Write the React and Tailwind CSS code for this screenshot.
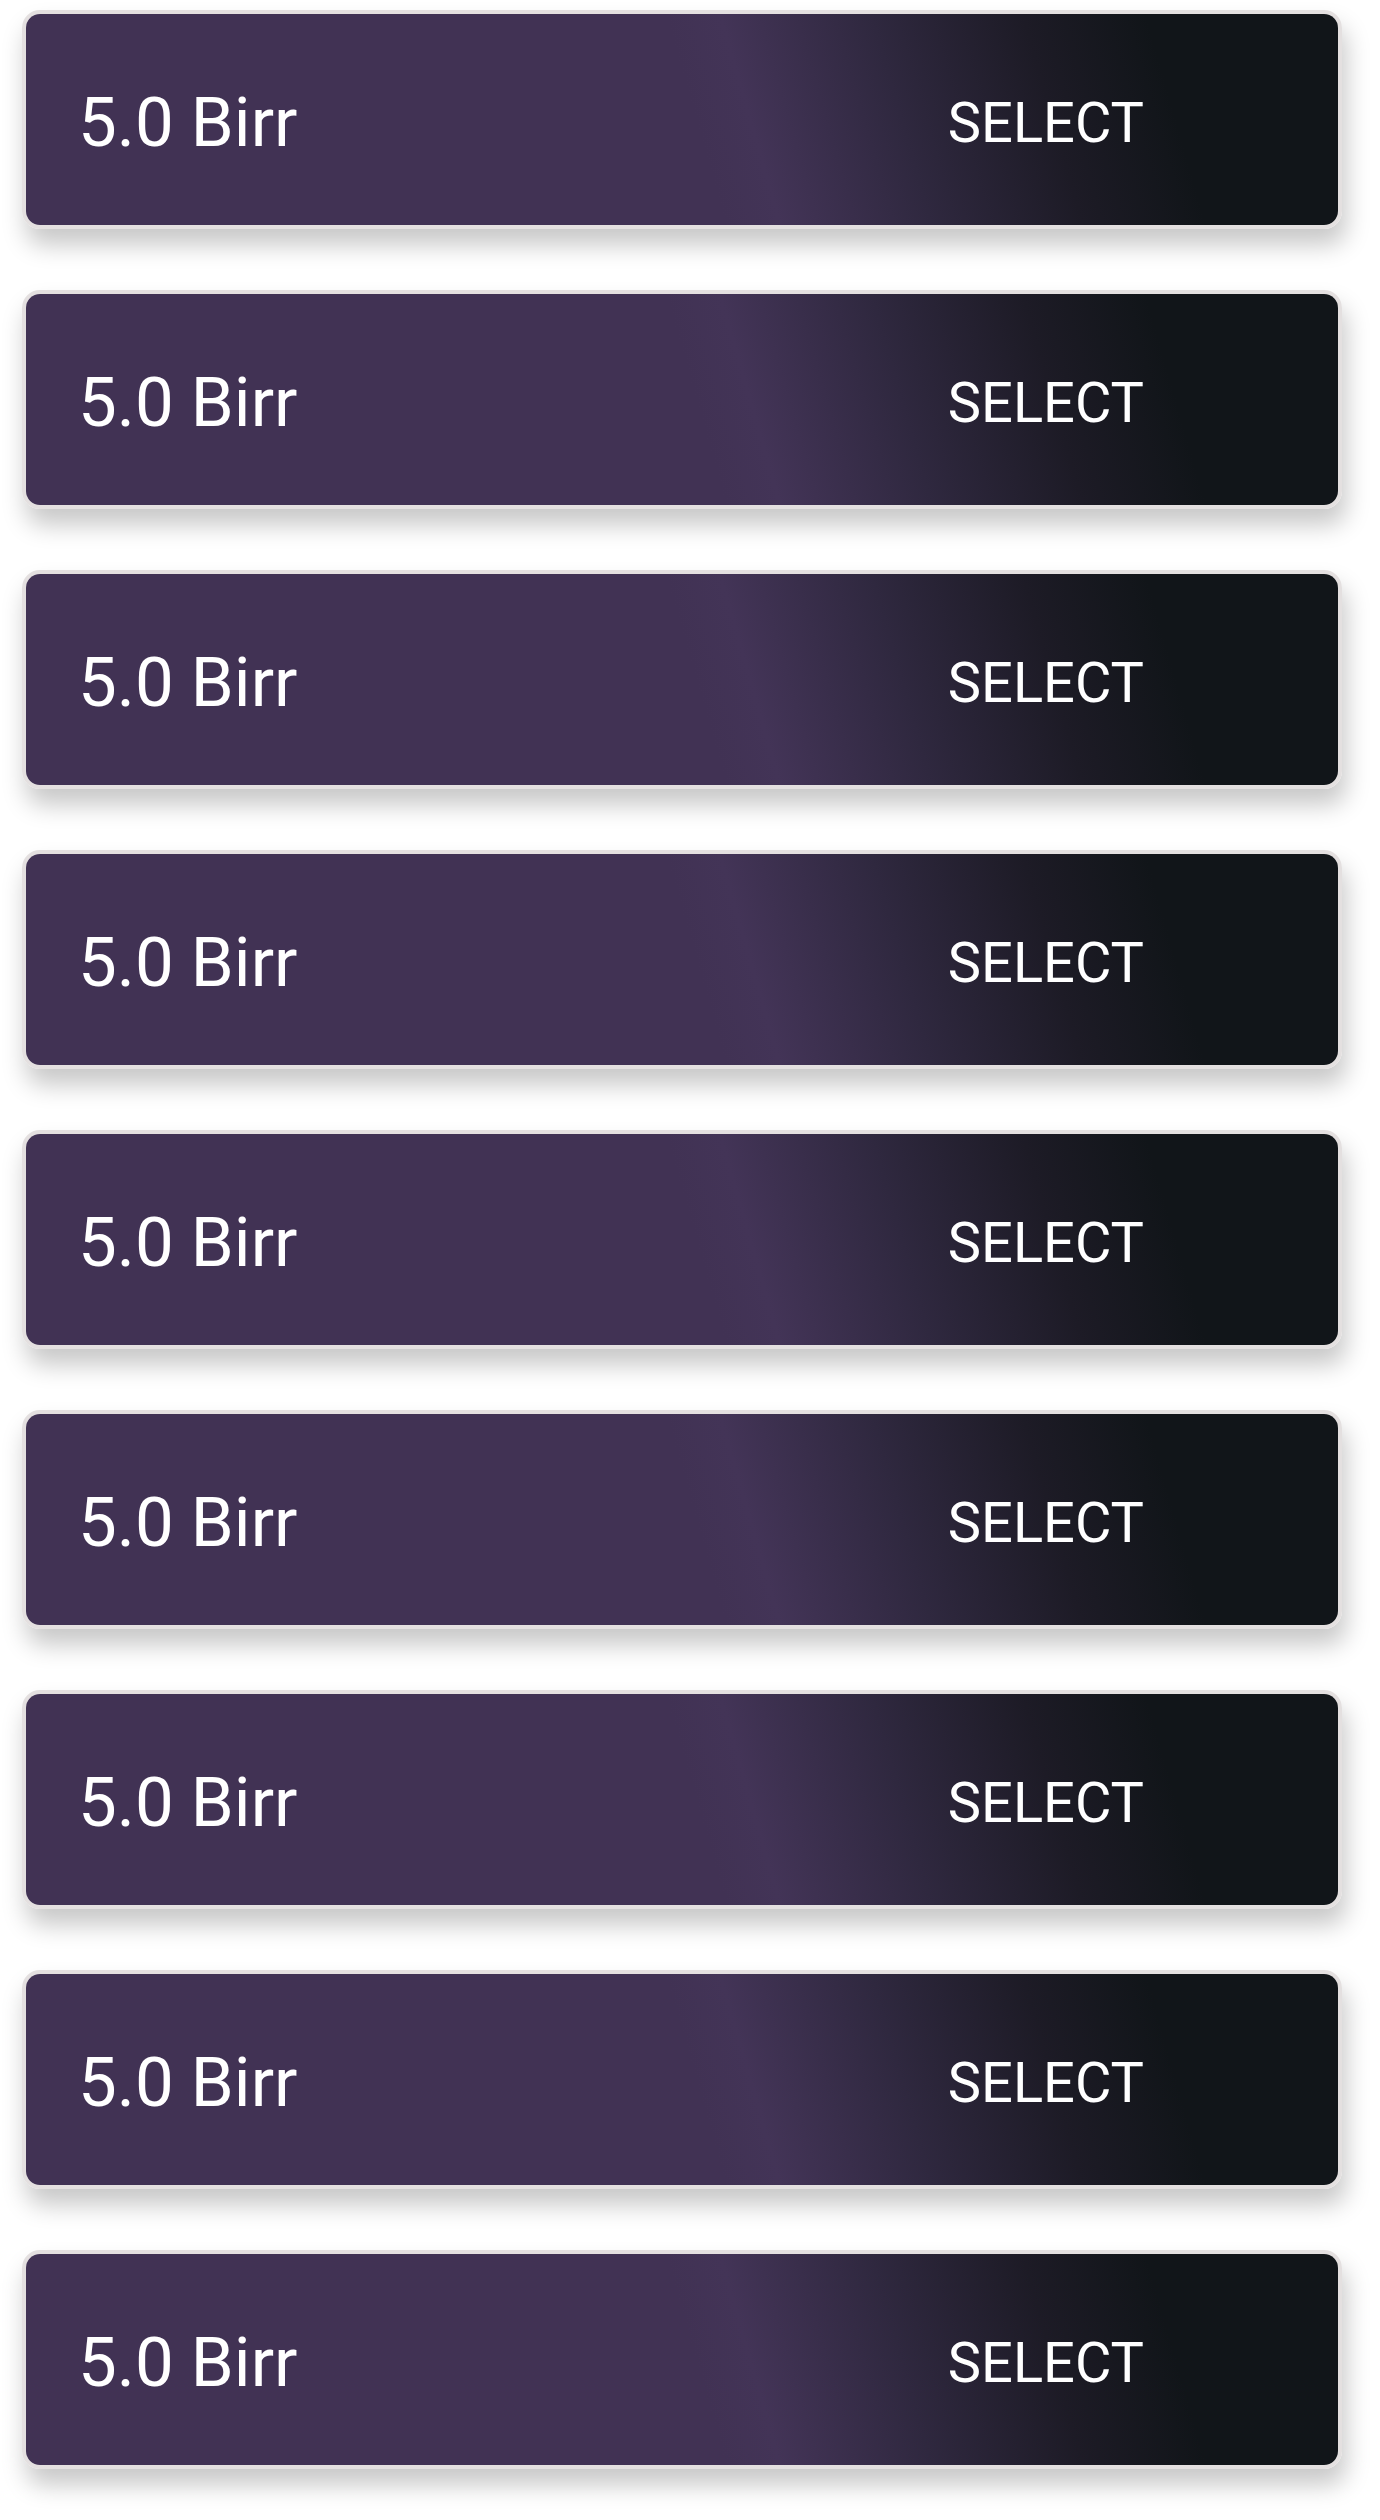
const plans = Array.from({ length: 9 }, (_, i) => ({ id: i, price: "5.0 Birr" }));

function PlanCard({ price }) {
  return (
    <div className="rounded-[18px] border-4 border-[#e4e0e0] shadow-[4px_16px_24px_rgba(0,0,0,0.22)]">
      <div className="flex h-[211px] items-center justify-between rounded-[14px] bg-[linear-gradient(74deg,#413254_0%,#413254_51%,#433457_55%,#2f283f_66%,#1d1b26_77%,#111519_86%,#111519_100%)] pl-[52px] pr-[194px]">
        <span className="mt-[6px] text-[69px] leading-none text-white">{price}</span>
        <button className="mt-[6px] text-[56px] leading-none text-white">SELECT</button>
      </div>
    </div>
  );
}

export default function App() {
  return (
    <div
      className="flex min-h-[2520px] flex-col gap-[61px] bg-white pl-[22px] pr-[38px] pt-[10px]"
      style={{ fontFamily: "Roboto, 'Liberation Sans', sans-serif" }}
    >
      {plans.map((p) => (
        <PlanCard key={p.id} price={p.price} />
      ))}
    </div>
  );
}
